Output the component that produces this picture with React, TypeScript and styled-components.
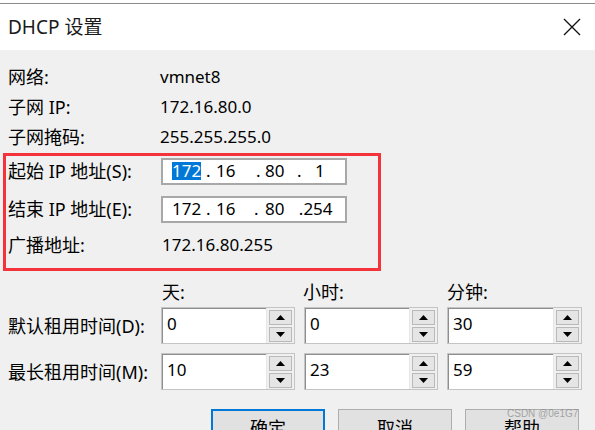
import React from "react";
import styled, { createGlobalStyle } from "styled-components";

const Global = createGlobalStyle`
  html, body { margin: 0; padding: 0; background: #f0f0f0; overflow: hidden; }
  body { font-family: "Noto Sans", "Noto Sans CJK SC", sans-serif; color: #000; }
`;

const Frame = styled.div`
  width: 595px;
  height: 430px;
  background: #ffffff;
  padding-top: 3px;
  box-sizing: border-box;
  display: flex;
  flex-direction: column;
  overflow: hidden;
  position: relative;
`;

const TitleBar = styled.div`
  height: 47px;
  flex: none;
  box-sizing: border-box;
  border-top: 1px solid #8a8a8a;
  background: #ffffff;
  display: flex;
  align-items: center;
  justify-content: space-between;
  padding: 0 14px 0 8px;
`;

const Title = styled.div`
  font-size: 19px;
  line-height: 24px;
  color: #1a1a1a;
`;

const Body = styled.div`
  flex: 1;
  background: #f0f0f0;
  padding-top: 12px;
  display: flex;
  flex-direction: column;
`;

const InfoRow = styled.div`
  display: grid;
  grid-template-columns: 152px 1fr;
  height: 30px;
  align-items: center;
  padding-left: 8px;
`;

const Label = styled.div`
  font-size: 18px;
  line-height: 22px;
  white-space: nowrap;
`;

const Value = styled.div<{ $dx?: number }>`
  font-size: 17px;
  line-height: 22px;
  padding-left: ${(p) => p.$dx ?? 0}px;
`;

const RedBox = styled.div`
  margin: 1px 0 0 3px;
  width: 378px;
  height: 118px;
  box-sizing: border-box;
  border: 3px solid #f5333b;
  display: flex;
  flex-direction: column;
`;

const BoxRow = styled.div<{ $mt: number }>`
  display: grid;
  grid-template-columns: 153px 1fr;
  height: 28px;
  margin-top: ${(p) => p.$mt}px;
  align-items: center;
  padding-left: 2px;
`;

const IpField = styled.div`
  width: 186px;
  height: 27px;
  box-sizing: border-box;
  background: #ffffff;
  border: 2px solid #a8a8a8;
  display: flex;
  align-items: center;
  padding-left: 9px;
  font-size: 17px;
`;

const Seg = styled.span<{ $w: number; $sel?: boolean }>`
  display: inline-block;
  width: ${(p) => p.$w}px;
  line-height: 18px;
  white-space: pre;
  ${(p) => (p.$sel ? "background:#0078d7;color:#fff;" : "")}
`;

const Dot = styled.span<{ $w: number; $at: number }>`
  display: inline-block;
  width: ${(p) => p.$w}px;
  padding-left: ${(p) => p.$at}px;
  box-sizing: border-box;
  line-height: 18px;
`;

const TimeGrid = styled.div<{ $mt: number; $h: number }>`
  display: grid;
  grid-template-columns: 144px 134px 134px 135px;
  column-gap: 9px;
  padding-left: 8px;
  margin-top: ${(p) => p.$mt}px;
  height: ${(p) => p.$h}px;
  align-items: center;
`;

const HeadLabel = styled.div<{ $dx?: number }>`
  font-size: 18px;
  line-height: 22px;
  margin-left: ${(p) => p.$dx ?? 0}px;
`;

const Spin = styled.div`
  height: 37px;
  box-sizing: border-box;
  border: 1px solid #c4c4c4;
  box-shadow: inset 1px 1px 0 #8e8e8e;
  background: #ffffff;
  display: flex;
`;

const SpinText = styled.div`
  flex: 1;
  font-size: 17px;
  line-height: 20px;
  padding: 6px 0 0 5px;
`;

const SpinButtons = styled.div`
  width: 28px;
  background: #f0f0f0;
  display: flex;
  flex-direction: column;
  justify-content: center;
  gap: 2px;
  padding: 0 2px 0 2px;
  box-sizing: border-box;
  border-left: 1px solid #e6e6e6;
`;

const ArrowBtn = styled.div`
  height: 15px;
  box-sizing: border-box;
  background: #e5e5e5;
  border: 1px solid #b9b9b9;
  display: flex;
  align-items: center;
  justify-content: center;
`;

const ButtonRow = styled.div`
  display: flex;
  justify-content: flex-end;
  gap: 13px;
  padding-right: 16px;
  margin-top: 19px;
`;

const Button = styled.div<{ $primary?: boolean }>`
  width: 114px;
  height: 36px;
  flex: none;
  box-sizing: border-box;
  background: #e1e1e1;
  border: ${(p) => (p.$primary ? "2px solid #0078d7" : "1px solid #adadad")};
  display: flex;
  align-items: center;
  justify-content: center;
  font-size: 18px;
`;

const Watermark = styled.div`
  position: absolute;
  left: 507px;
  top: 408px;
  font-family: "Liberation Sans", sans-serif;
  font-size: 10px;
  color: rgba(140, 140, 140, 0.75);
`;

const Arrow = ({ up }: { up?: boolean }) => (
  <svg width="9" height="5" viewBox="0 0 9 5">
    {up ? <polygon points="0,5 9,5 4.5,0" fill="#000" /> : <polygon points="0,0 9,0 4.5,5" fill="#000" />}
  </svg>
);

const SpinBox = ({ value }: { value: string }) => (
  <Spin>
    <SpinText>{value}</SpinText>
    <SpinButtons>
      <ArrowBtn>
        <Arrow up />
      </ArrowBtn>
      <ArrowBtn>
        <Arrow />
      </ArrowBtn>
    </SpinButtons>
  </Spin>
);

export default function App() {
  return (
    <>
      <Global />
      <Frame>
        <TitleBar>
          <Title>DHCP 设置</Title>
          <svg width="18" height="18" viewBox="0 0 18 18">
            <path d="M1 1 L17 17 M17 1 L1 17" stroke="#111" strokeWidth="1.3" />
          </svg>
        </TitleBar>
        <Body>
          <InfoRow>
            <Label>网络:</Label>
            <Value>vmnet8</Value>
          </InfoRow>
          <InfoRow>
            <Label>子网 IP:</Label>
            <Value>172.16.80.0</Value>
          </InfoRow>
          <InfoRow>
            <Label>子网掩码:</Label>
            <Value>255.255.255.0</Value>
          </InfoRow>
          <RedBox>
            <BoxRow $mt={1}>
              <Label>起始 IP 地址(S):</Label>
              <IpField>
                <Seg $w={29} $sel>172</Seg>
                <Dot $w={15} $at={5}>.</Dot>
                <Seg $w={25}>16</Seg>
                <Dot $w={24} $at={15}>.</Dot>
                <Seg $w={25}>80</Seg>
                <Dot $w={25} $at={7}>.</Dot>
                <Seg $w={12}>1</Seg>
              </IpField>
            </BoxRow>
            <BoxRow $mt={10}>
              <Label>结束 IP 地址(E):</Label>
              <IpField>
                <Seg $w={29}>172</Seg>
                <Dot $w={15} $at={5}>.</Dot>
                <Seg $w={25}>16</Seg>
                <Dot $w={24} $at={13}>.</Dot>
                <Seg $w={25}>80</Seg>
                <Seg $w={40}>{"  .254"}</Seg>
              </IpField>
            </BoxRow>
            <BoxRow $mt={8}>
              <Label>广播地址:</Label>
              <Value $dx={1}>172.16.80.255</Value>
            </BoxRow>
          </RedBox>
          <TimeGrid $mt={9} $h={24}>
            <span />
            <HeadLabel $dx={1}>天:</HeadLabel>
            <HeadLabel $dx={-1}>小时:</HeadLabel>
            <HeadLabel>分钟:</HeadLabel>
          </TimeGrid>
          <TimeGrid $mt={3} $h={37}>
            <Label>默认租用时间(D):</Label>
            <SpinBox value="0" />
            <SpinBox value="0" />
            <SpinBox value="30" />
          </TimeGrid>
          <TimeGrid $mt={9} $h={37}>
            <Label>最长租用时间(M):</Label>
            <SpinBox value="10" />
            <SpinBox value="23" />
            <SpinBox value="59" />
          </TimeGrid>
          <ButtonRow>
            <Button $primary>确定</Button>
            <Button>取消</Button>
            <Button>帮助</Button>
          </ButtonRow>
        </Body>
        <Watermark>CSDN @0e1G7</Watermark>
      </Frame>
    </>
  );
}
